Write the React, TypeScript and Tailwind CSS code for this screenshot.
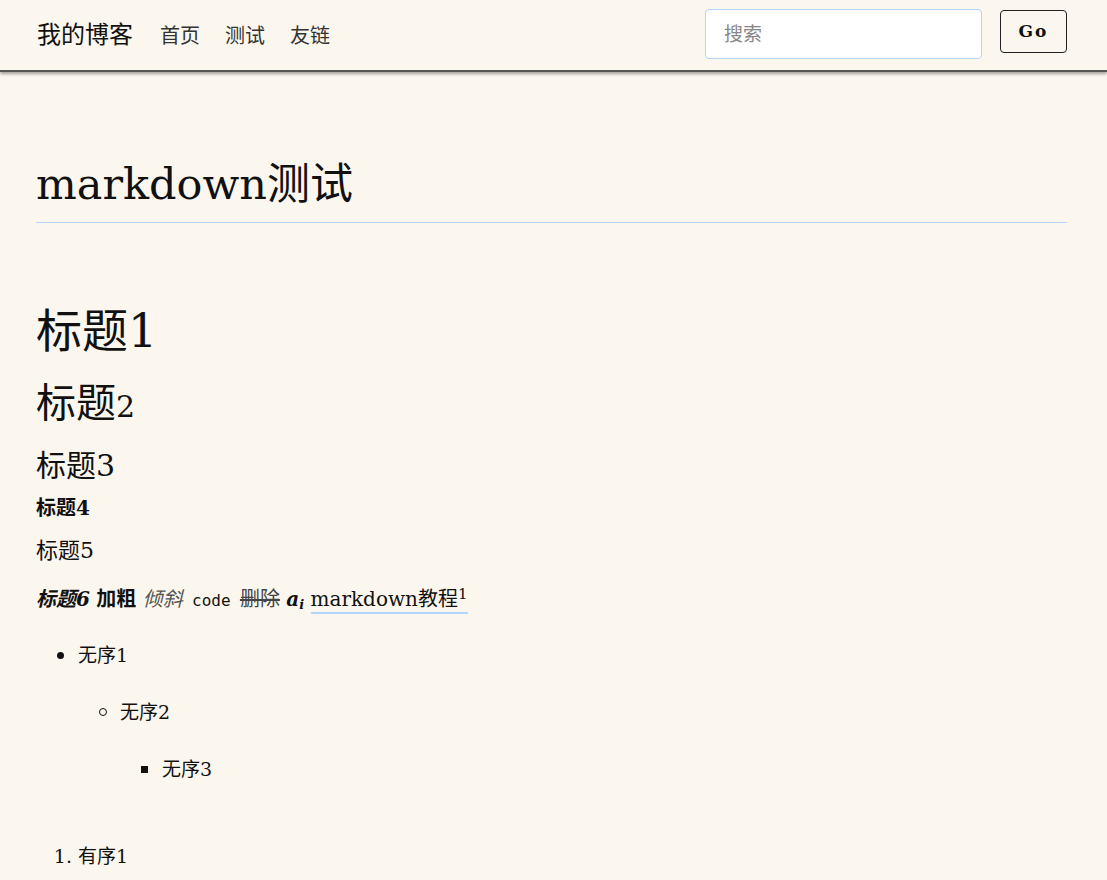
import React from 'react';

const font = "font-['DejaVu_Serif','Noto_Sans_CJK_SC',serif]";

const Marker = ({ kind }: { kind: 'disc' | 'circle' | 'square' }) => (
  <span className="flex w-[42px] shrink-0 items-center pl-[21px]">
    {kind === 'disc' && <span className="h-[7px] w-[7px] rounded-full bg-[#111]" />}
    {kind === 'circle' && <span className="h-[8px] w-[8px] rounded-full border border-[#111]" />}
    {kind === 'square' && <span className="h-[7px] w-[7px] bg-[#111]" />}
  </span>
);

export default function App() {
  return (
    <div className={`min-h-[880px] bg-[#fbf7ee] text-[#111] ${font}`}>
      {/* top bar */}
      <header className="flex h-[72px] items-center justify-between border-b-2 border-[#555] pl-[37px] pr-[40px] shadow-[0_2px_3px_rgba(0,0,0,0.35)]">
        <nav className="flex items-center">
          <span className="text-[24px]">我的博客</span>
          <a className="ml-[27px] mt-[2px] text-[20px] text-[#333]">首页</a>
          <a className="ml-[25px] mt-[2px] text-[20px] text-[#333]">测试</a>
          <a className="ml-[25px] mt-[2px] text-[20px] text-[#333]">友链</a>
        </nav>
        <div className="flex items-center">
          <input
            placeholder="搜索"
            className="mb-[2px] h-[50px] w-[277px] rounded-[4px] border border-[#b3d4fc] bg-white px-[18px] text-[19px] placeholder:text-[#888] focus:outline-none"
          />
          <button className="mb-[7px] ml-[18px] h-[43px] w-[67px] rounded-[4px] border border-[#222] text-[17px] font-bold tracking-[2px]">
            Go
          </button>
        </div>
      </header>

      <main className="pl-[36px] pr-[40px] pt-[82px]">
        <h1 className="border-b border-[#b3d4fc] pb-[8px] text-[43px] leading-[60px]">markdown测试</h1>

        <h1 className="mt-[80px] text-[46px] leading-[56px]">标题1</h1>
        <h2 className="mt-[19px] text-[40px] leading-[50px]">
          标题<span className="text-[30px]">2</span>
        </h2>
        <h3 className="mt-[14px] text-[30px] leading-[40px]">标题3</h3>
        <h4 className="mt-[7px] text-[20px] font-bold leading-[30px]">标题4</h4>
        <h5 className="mt-[13px] text-[22px] leading-[30px]">标题5</h5>
        <p className="mt-[18px] text-[20px] leading-[30px]">
          <b className="italic">标题6</b> <b>加粗</b>{' '}
          <i className="text-[#555]">倾斜</i>{' '}
          <code className="px-[3px] font-['DejaVu_Sans_Mono','Noto_Sans_CJK_SC',monospace] text-[16px]">code</code>{' '}
          <s className="text-[#444]">删除</s>{' '}
          <span className="font-bold italic">
            a<sub className="text-[13px]">i</sub>
          </span>{' '}
          <span className="border-b-2 border-[#b3d4fc] pb-[1px]">
            <a>markdown教程</a>
            <sup className="text-[15px]">1</sup>
          </span>
        </p>

        <ul className="mt-[24px] text-[19px] leading-[30px]">
          <li>
            <div className="flex">
              <Marker kind="disc" />
              <span>无序1</span>
            </div>
            <ul className="mt-[27px] pl-[42px]">
              <li>
                <div className="flex">
                  <Marker kind="circle" />
                  <span>无序2</span>
                </div>
                <ul className="mt-[27px] pl-[42px]">
                  <li className="flex">
                    <Marker kind="square" />
                    <span>无序3</span>
                  </li>
                </ul>
              </li>
            </ul>
          </li>
        </ul>

        <ol className="mt-[57px] list-decimal pl-[42px] text-[19px] leading-[30px]">
          <li>有序1</li>
        </ol>
      </main>
    </div>
  );
}
